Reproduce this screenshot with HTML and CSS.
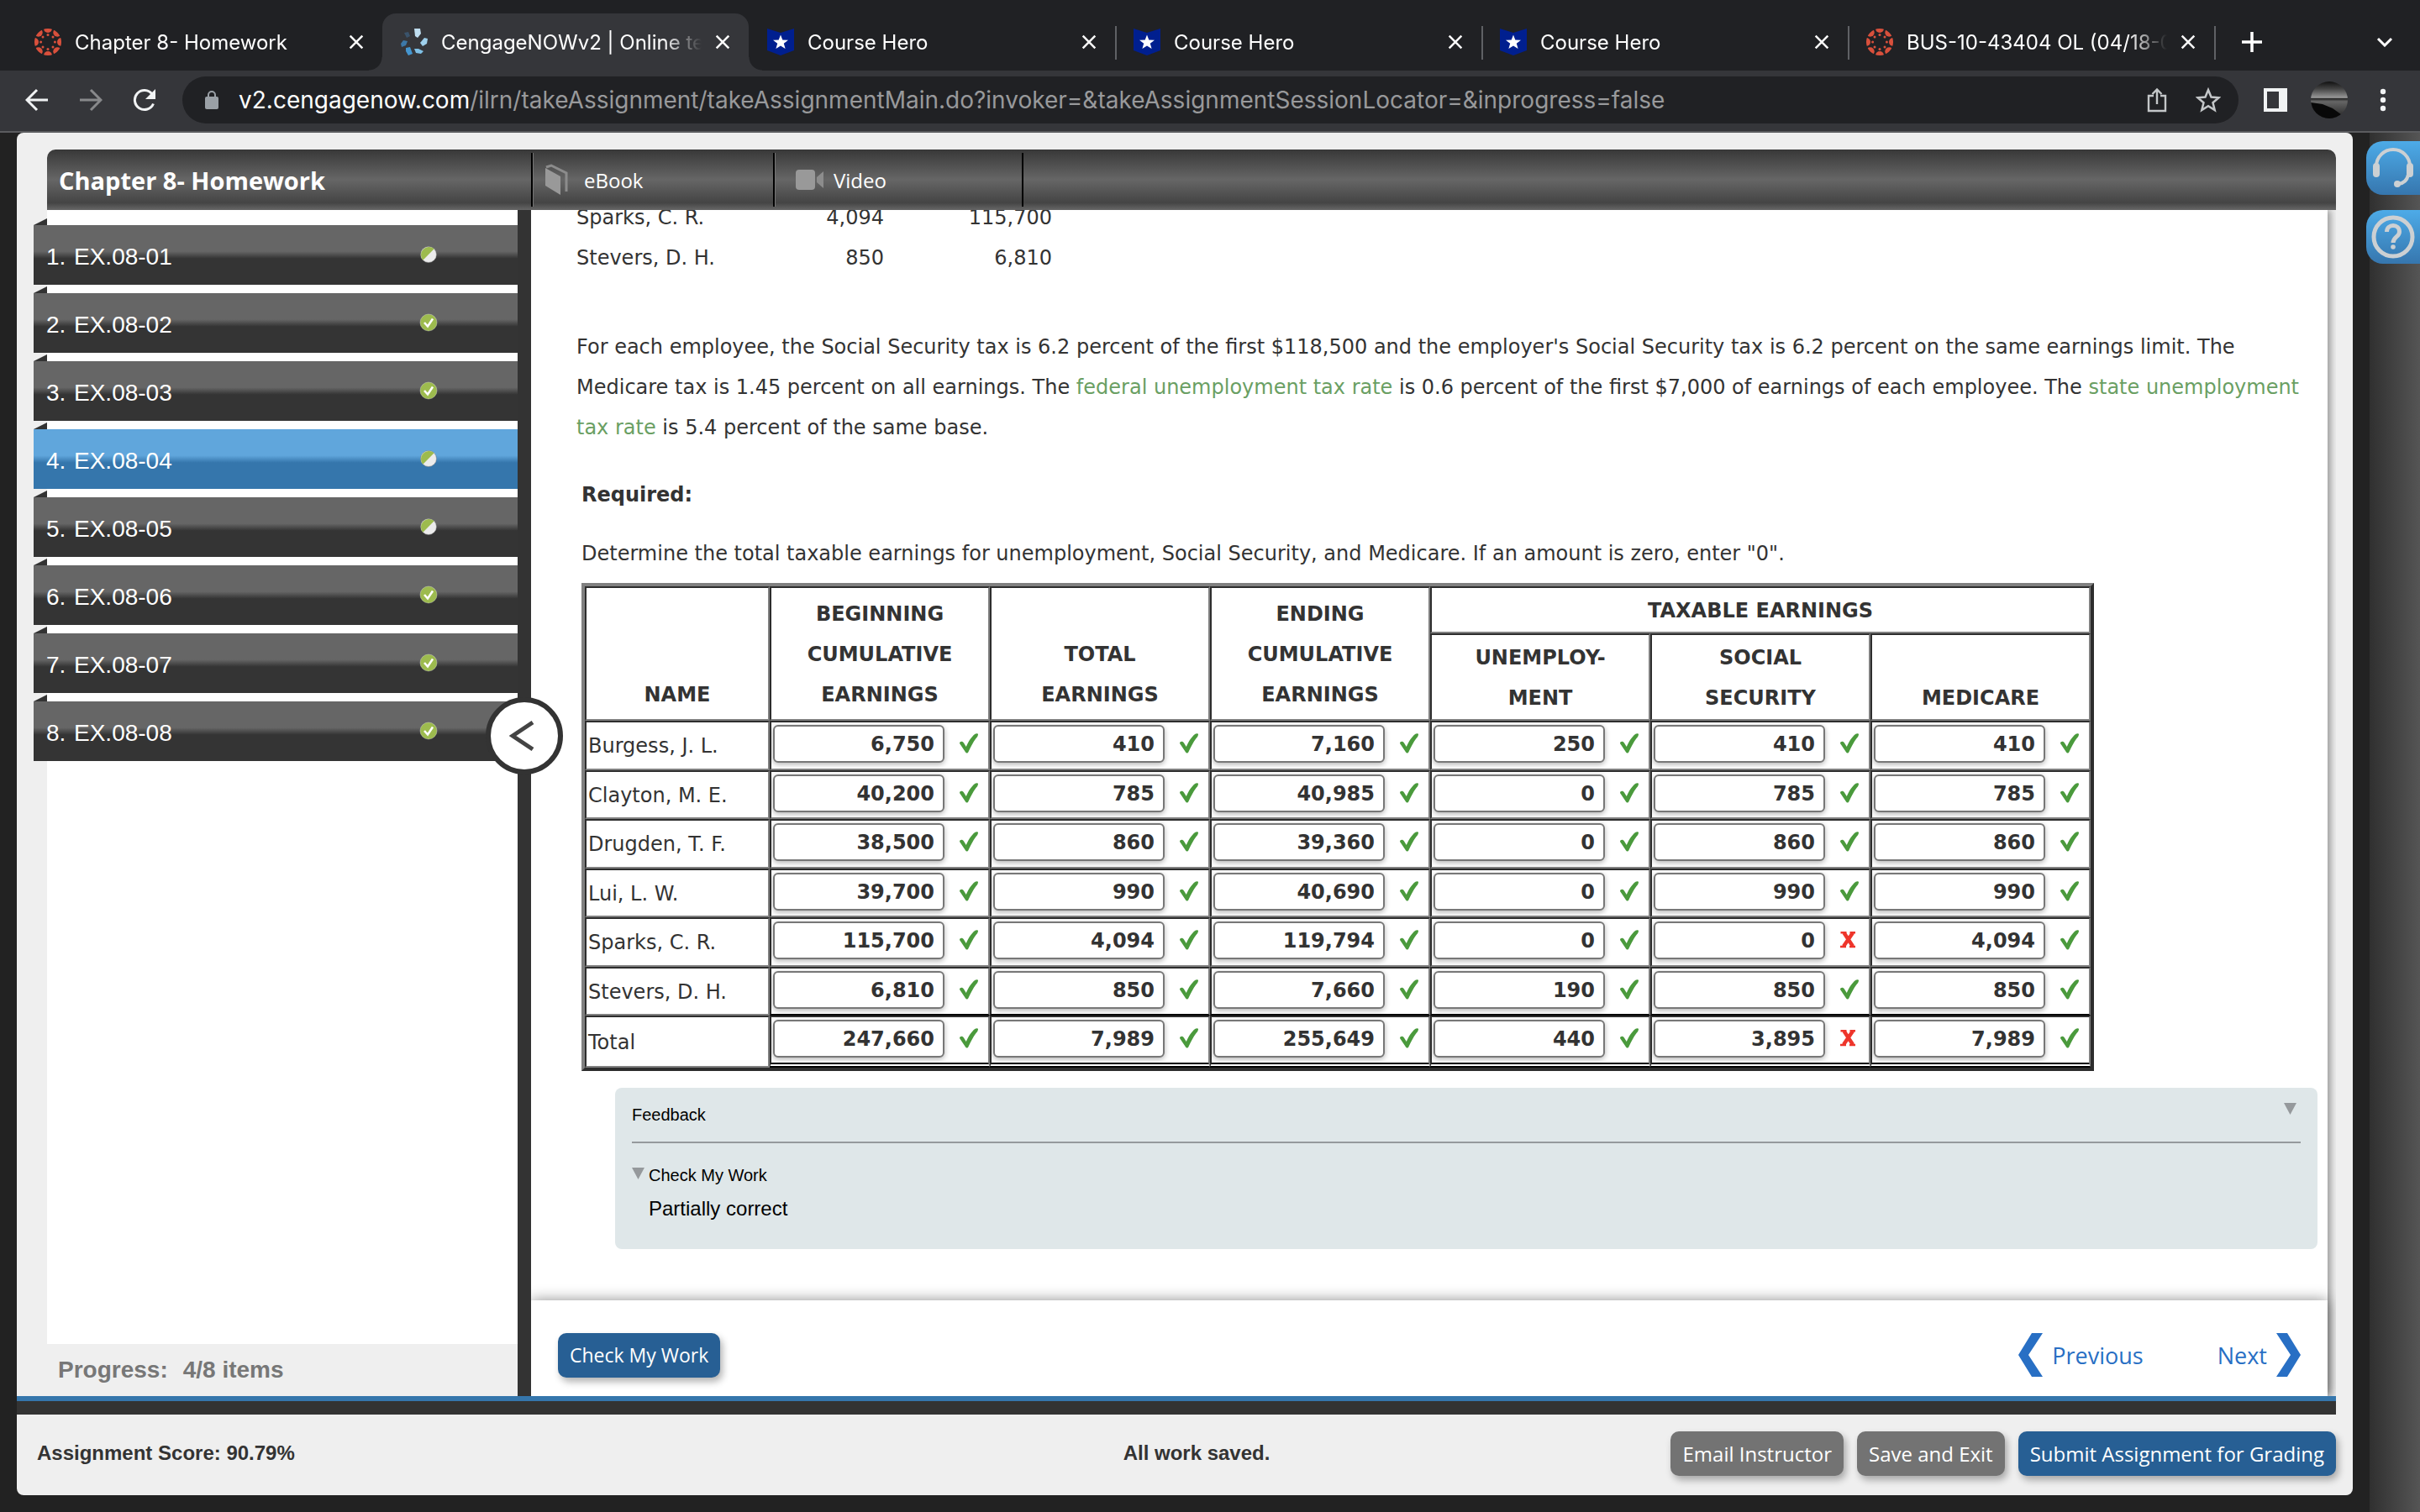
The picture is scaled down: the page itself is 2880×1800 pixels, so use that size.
FILE: index.html
```html
<!DOCTYPE html>
<html lang="en">
<head>
<meta charset="utf-8">
<title>CengageNOWv2 | Online teaching and learning resource</title>
<link rel="stylesheet" href="styles.css">
</head>
<body>
<svg class="defs" aria-hidden="true">
  <symbol id="close" viewBox="0 0 16 16"><path d="M1.500 1.500l13 13M14.500 1.500l-13 13" stroke="currentColor" stroke-width="2.200" fill="none"/></symbol>
  <clipPath id="disc"><circle cx="16" cy="16" r="16"/></clipPath>
  <symbol id="canvas" viewBox="0 0 32 32">
    <g fill="#d9503c" clip-path="url(#disc)"><circle cx="16" cy="0" r="5"/><circle cx="16" cy="32" r="5"/><circle cx="0" cy="16" r="5"/><circle cx="32" cy="16" r="5"/><circle cx="4.700" cy="4.700" r="5"/><circle cx="27.300" cy="4.700" r="5"/><circle cx="4.700" cy="27.300" r="5"/><circle cx="27.300" cy="27.300" r="5"/></g>
    <g fill="#d9503c"><circle cx="16" cy="7.600" r="1.500"/><circle cx="16" cy="24.400" r="1.500"/><circle cx="7.600" cy="16" r="1.500"/><circle cx="24.400" cy="16" r="1.500"/><circle cx="10" cy="10" r="1.500"/><circle cx="22" cy="10" r="1.500"/><circle cx="10" cy="22" r="1.500"/><circle cx="22" cy="22" r="1.500"/></g>
  </symbol>
  <symbol id="hero" viewBox="0 0 32 32"><path fill="#001f8f" d="M0 0l16 5L32 0v26l-16 6L0 26z"/><path fill="#fff" d="M16 7.500l2.300 6.100 6.700.200-5.200 4 1.800 6.300-5.600-3.700-5.600 3.700 1.800-6.300-5.200-4 6.700-.200z"/></symbol>
  <symbol id="tick" viewBox="0 0 24 24"><path fill="#4a9a3c" d="M1 12c0-2.500 3.600-3 5-.500l2.800 4.500C11.500 10 15 4 19.500.800c1.300-.900 3.800-.600 3.500.700-.500 2.500-1.200 3.200-2.500 4.500C17 10.500 14.500 16 11.500 22c-1 2-2.600 2-3.600.200z"/></symbol>
  <symbol id="cross" viewBox="0 0 24 24"><path d="M5.500 3.500l10.500 16M16 3.500l-11 16" stroke="#ee352b" stroke-width="4.500"/><path d="M1.500 3.200h7M12.500 3.200h6.500M1 20h7M12 20h7" stroke="#ee352b" stroke-width="2.400"/></symbol>
  <symbol id="done" viewBox="0 0 22 22"><circle cx="11" cy="11" r="10" fill="#9dbb4e" stroke="#fff" stroke-opacity=".3"/><path d="M6 11l4 4.500 6-9" stroke="#fff" stroke-width="2.600" fill="none"/></symbol>
  <symbol id="part" viewBox="0 0 22 22"><circle cx="11" cy="11" r="9.500" fill="#ececec" stroke="#777" stroke-opacity=".5"/><path d="M4.300 17.700A9.500 9.500 0 0 1 17.700 4.300z" fill="#9dbb4e"/></symbol>
</svg>

<header class="browser">
  <div class="tabs">
    <div class="tab"><svg class="fav"><use href="#canvas"/></svg><span class="tab-title">Chapter 8- Homework</span><svg class="x"><use href="#close"/></svg></div>
    <div class="tab active"><svg class="fav" viewBox="0 0 32 32"><path d="M16 0h7l1 6-4 5-3-2z" fill="#c0def0"/><path d="M23 17l5-6 4 1-1 6-5 3z" fill="#9fd0ec"/><path d="M16 24l5 0 6 3-3 3-6-1z" fill="#7fc0e6"/><path d="M6 23l5-1 3 8-5 2-3-5z" fill="#4596cf"/><path d="M0 18l3-4 5 1-2 5-5 2z" fill="#3d78a8"/><path d="M4 5l5-1 2 5-4 2z" fill="#3a536b"/></svg><span class="tab-title">CengageNOWv2 | Online teaching</span><svg class="x"><use href="#close"/></svg></div>
    <div class="tab"><svg class="fav"><use href="#hero"/></svg><span class="tab-title">Course Hero</span><svg class="x"><use href="#close"/></svg></div>
    <div class="tab line"><svg class="fav"><use href="#hero"/></svg><span class="tab-title">Course Hero</span><svg class="x"><use href="#close"/></svg></div>
    <div class="tab line"><svg class="fav"><use href="#hero"/></svg><span class="tab-title">Course Hero</span><svg class="x"><use href="#close"/></svg></div>
    <div class="tab line"><svg class="fav"><use href="#canvas"/></svg><span class="tab-title">BUS-10-43404 OL (04/18-06/30)</span><svg class="x"><use href="#close"/></svg></div>
    <div class="tab-tools line">
      <svg width="24" height="24" viewBox="0 0 24 24"><path d="M12 0v24M0 12h24" stroke="#fff" stroke-width="3.500"/></svg>
      <svg width="20" height="12" viewBox="0 0 20 12"><path d="M2 2l8 8 8-8" stroke="#fff" stroke-width="3" fill="none"/></svg>
    </div>
  </div>
  <div class="toolbar">
    <div class="nav">
      <svg viewBox="0 0 28 28"><path d="M27 14H3M14 2L2 14l12 12" stroke="#f1f3f4" stroke-width="3" fill="none"/></svg>
      <svg viewBox="0 0 28 28"><path d="M1 14h24M14 2l12 12-12 12" stroke="#88898b" stroke-width="3" fill="none"/></svg>
      <svg viewBox="0 0 28 28"><path d="M24.500 18.500A11.500 11.500 0 1 1 23 7" stroke="#f1f3f4" stroke-width="3" fill="none"/><path d="M27 1v12H15z" fill="#f1f3f4"/></svg>
    </div>
    <div class="address">
      <svg width="16" height="22" viewBox="0 0 16 22"><rect y="7" width="16" height="15" rx="2" fill="#9aa0a6"/><path d="M4 8V5a4 4 0 0 1 8 0v3" stroke="#9aa0a6" stroke-width="2" fill="none"/></svg>
      <span class="url">v2.cengagenow.com<span class="path">/ilrn/takeAssignment/takeAssignmentMain.do?invoker=&amp;takeAssignmentSessionLocator=&amp;inprogress=false</span></span>
      <svg width="24" height="30" viewBox="0 0 24 30"><path d="M8 10H2v18h20V10h-6M12 20V3M6.500 8L12 2.500 17.500 8" stroke="#c4c7c9" stroke-width="2.400" fill="none"/></svg>
      <svg width="30" height="30" viewBox="0 0 30 30"><path d="M15 3l3.500 8.500 9 .700-7 6 2.200 8.800L15 22.300 7.300 27l2.200-8.800-7-6 9-.700z" stroke="#c4c7c9" stroke-width="2.500" fill="none"/></svg>
    </div>
    <div class="tools">
      <svg width="28" height="28" viewBox="0 0 28 28"><path fill="#f1f3f4" d="M0 0h28v28H0zM4 4v20h14V4z" fill-rule="evenodd"/></svg>
      <svg width="44" height="44" viewBox="0 0 44 44"><defs><clipPath id="round"><circle cx="22" cy="22" r="22"/></clipPath><linearGradient id="sky" x2="0" y2="1"><stop offset="0" stop-color="#111"/><stop offset=".2" stop-color="#444"/><stop offset=".44" stop-color="#999"/><stop offset=".46" stop-color="#222"/><stop offset=".54" stop-color="#666"/><stop offset="1" stop-color="#222"/></linearGradient></defs><g clip-path="url(#round)"><path fill="url(#sky)" d="M0 0h44v44H0z"/><path fill="#080808" d="M0 25l14 2 12 5 14 10v2H0z"/></g></svg>
      <svg width="8" height="28" viewBox="0 0 8 28"><g fill="#f1f3f4"><circle cx="4" cy="4" r="3.200"/><circle cx="4" cy="14" r="3.200"/><circle cx="4" cy="24" r="3.200"/></g></svg>
    </div>
  </div>
</header>

<div class="page">
  <div class="app">
    <div class="titlebar">
      <h1>Chapter 8- Homework</h1>
      <a class="tool ebook" href="#ebook"><svg width="28" height="38" viewBox="0 0 28 38"><path fill="#999" d="M1 5l18 10v22L1 26z"/><path d="M2 4l6-2 18 9v22" stroke="#8c8c8c" stroke-width="3" fill="none"/></svg>eBook</a>
      <a class="tool video" href="#video"><svg width="34" height="24" viewBox="0 0 34 24"><rect width="23" height="24" rx="4" fill="#999"/><path d="M33 2v20l-8-7V9z" fill="#8c8c8c"/></svg>Video</a>
    </div>

    <div class="workspace">
      <nav class="sidebar">
        <ol class="items">
          <li><a href="#1"><span class="num">1.</span>EX.08-01<svg><use href="#part"/></svg></a></li>
          <li><a href="#2"><span class="num">2.</span>EX.08-02<svg><use href="#done"/></svg></a></li>
          <li><a href="#3"><span class="num">3.</span>EX.08-03<svg><use href="#done"/></svg></a></li>
          <li class="current"><a href="#4"><span class="num">4.</span>EX.08-04<svg><use href="#part"/></svg></a></li>
          <li><a href="#5"><span class="num">5.</span>EX.08-05<svg><use href="#part"/></svg></a></li>
          <li><a href="#6"><span class="num">6.</span>EX.08-06<svg><use href="#done"/></svg></a></li>
          <li><a href="#7"><span class="num">7.</span>EX.08-07<svg><use href="#done"/></svg></a></li>
          <li><a href="#8"><span class="num">8.</span>EX.08-08<svg><use href="#done"/></svg></a></li>
        </ol>
        <p class="progress"><span>Progress:</span><span>4/8 items</span></p>
      </nav>
      <div class="divider"><button class="collapse" aria-label="Collapse"><svg width="30" height="38" viewBox="0 0 30 38"><path d="M28 3L4 19l24 16" stroke="#444" stroke-width="5" fill="none"/></svg></button></div>

      <main class="content">
        <div class="question">
          <table class="given">
            <tr><td>Sparks, C. R.</td><td>4,094</td><td>115,700</td></tr>
            <tr><td>Stevers, D. H.</td><td>850</td><td>6,810</td></tr>
          </table>
          <p class="intro">For each employee, the Social Security tax is 6.2 percent of the first $118,500 and the employer's Social Security tax is 6.2 percent on the same earnings limit. The<br>Medicare tax is 1.45 percent on all earnings. The <a href="#futa">federal unemployment tax rate</a> is 0.6 percent of the first $7,000 of earnings of each employee. The <a href="#suta">state unemployment<br>tax rate</a> is 5.4 percent of the same base.</p>
          <h2>Required:</h2>
          <p class="ask">Determine the total taxable earnings for unemployment, Social Security, and Medicare. If an amount is zero, enter "0".</p>
          <table class="sheet">
            <colgroup><col class="c-name"><col><col><col><col><col><col></colgroup>
            <thead>
              <tr><th rowspan="2">NAME</th><th rowspan="2">BEGINNING<br>CUMULATIVE<br>EARNINGS</th><th rowspan="2">TOTAL<br>EARNINGS</th><th rowspan="2">ENDING<br>CUMULATIVE<br>EARNINGS</th><th colspan="3">TAXABLE EARNINGS</th></tr>
              <tr><th>UNEMPLOY-<br>MENT</th><th>SOCIAL<br>SECURITY</th><th>MEDICARE</th></tr>
            </thead>
            <tbody>
              <tr><td>Burgess, J. L.</td>
                <td><div><input aria-label="Burgess beginning" value="6,750"><svg><use href="#tick"/></svg></div></td>
                <td><div><input aria-label="Burgess total" value="410"><svg><use href="#tick"/></svg></div></td>
                <td><div><input aria-label="Burgess ending" value="7,160"><svg><use href="#tick"/></svg></div></td>
                <td><div><input aria-label="Burgess unemployment" value="250"><svg><use href="#tick"/></svg></div></td>
                <td><div><input aria-label="Burgess social security" value="410"><svg><use href="#tick"/></svg></div></td>
                <td><div><input aria-label="Burgess medicare" value="410"><svg><use href="#tick"/></svg></div></td></tr>
              <tr><td>Clayton, M. E.</td>
                <td><div><input aria-label="Clayton beginning" value="40,200"><svg><use href="#tick"/></svg></div></td>
                <td><div><input aria-label="Clayton total" value="785"><svg><use href="#tick"/></svg></div></td>
                <td><div><input aria-label="Clayton ending" value="40,985"><svg><use href="#tick"/></svg></div></td>
                <td><div><input aria-label="Clayton unemployment" value="0"><svg><use href="#tick"/></svg></div></td>
                <td><div><input aria-label="Clayton social security" value="785"><svg><use href="#tick"/></svg></div></td>
                <td><div><input aria-label="Clayton medicare" value="785"><svg><use href="#tick"/></svg></div></td></tr>
              <tr><td>Drugden, T. F.</td>
                <td><div><input aria-label="Drugden beginning" value="38,500"><svg><use href="#tick"/></svg></div></td>
                <td><div><input aria-label="Drugden total" value="860"><svg><use href="#tick"/></svg></div></td>
                <td><div><input aria-label="Drugden ending" value="39,360"><svg><use href="#tick"/></svg></div></td>
                <td><div><input aria-label="Drugden unemployment" value="0"><svg><use href="#tick"/></svg></div></td>
                <td><div><input aria-label="Drugden social security" value="860"><svg><use href="#tick"/></svg></div></td>
                <td><div><input aria-label="Drugden medicare" value="860"><svg><use href="#tick"/></svg></div></td></tr>
              <tr><td>Lui, L. W.</td>
                <td><div><input aria-label="Lui beginning" value="39,700"><svg><use href="#tick"/></svg></div></td>
                <td><div><input aria-label="Lui total" value="990"><svg><use href="#tick"/></svg></div></td>
                <td><div><input aria-label="Lui ending" value="40,690"><svg><use href="#tick"/></svg></div></td>
                <td><div><input aria-label="Lui unemployment" value="0"><svg><use href="#tick"/></svg></div></td>
                <td><div><input aria-label="Lui social security" value="990"><svg><use href="#tick"/></svg></div></td>
                <td><div><input aria-label="Lui medicare" value="990"><svg><use href="#tick"/></svg></div></td></tr>
              <tr><td>Sparks, C. R.</td>
                <td><div><input aria-label="Sparks beginning" value="115,700"><svg><use href="#tick"/></svg></div></td>
                <td><div><input aria-label="Sparks total" value="4,094"><svg><use href="#tick"/></svg></div></td>
                <td><div><input aria-label="Sparks ending" value="119,794"><svg><use href="#tick"/></svg></div></td>
                <td><div><input aria-label="Sparks unemployment" value="0"><svg><use href="#tick"/></svg></div></td>
                <td><div><input aria-label="Sparks social security" value="0"><svg><use href="#cross"/></svg></div></td>
                <td><div><input aria-label="Sparks medicare" value="4,094"><svg><use href="#tick"/></svg></div></td></tr>
              <tr class="last"><td>Stevers, D. H.</td>
                <td><div><input aria-label="Stevers beginning" value="6,810"><svg><use href="#tick"/></svg></div></td>
                <td><div><input aria-label="Stevers total" value="850"><svg><use href="#tick"/></svg></div></td>
                <td><div><input aria-label="Stevers ending" value="7,660"><svg><use href="#tick"/></svg></div></td>
                <td><div><input aria-label="Stevers unemployment" value="190"><svg><use href="#tick"/></svg></div></td>
                <td><div><input aria-label="Stevers social security" value="850"><svg><use href="#tick"/></svg></div></td>
                <td><div><input aria-label="Stevers medicare" value="850"><svg><use href="#tick"/></svg></div></td></tr>
              <tr class="total"><td>Total</td>
                <td><div><input aria-label="Total beginning" value="247,660"><svg><use href="#tick"/></svg></div></td>
                <td><div><input aria-label="Total earnings" value="7,989"><svg><use href="#tick"/></svg></div></td>
                <td><div><input aria-label="Total ending" value="255,649"><svg><use href="#tick"/></svg></div></td>
                <td><div><input aria-label="Total unemployment" value="440"><svg><use href="#tick"/></svg></div></td>
                <td><div><input aria-label="Total social security" value="3,895"><svg><use href="#cross"/></svg></div></td>
                <td><div><input aria-label="Total medicare" value="7,989"><svg><use href="#tick"/></svg></div></td></tr>
            </tbody>
          </table>
          <section class="feedback">
            <div class="feedback-head"><h3>Feedback</h3><span class="arrow"></span></div>
            <div class="feedback-row"><span class="arrow"></span><h3>Check My Work</h3></div>
            <p>Partially correct</p>
          </section>
        </div>
        <footer class="actions">
          <button class="btn primary">Check My Work</button>
          <div class="pager">
            <a href="#prev"><svg width="30" height="52" viewBox="0 0 30 52"><path fill="#286fc4" d="M16 0h13L12 26l17 26H16L0 26z"/></svg>Previous</a>
            <a href="#next">Next<svg width="30" height="52" viewBox="0 0 30 52"><path fill="#286fc4" d="M14 0H1l17 26L1 52h13l16-26z"/></svg></a>
          </div>
        </footer>
      </main>
    </div>

    <div class="rule"></div>
    <footer class="status">
      <p>Assignment Score: 90.79%</p>
      <p>All work saved.</p>
      <div class="buttons"><button class="btn">Email Instructor</button><button class="btn">Save and Exit</button><button class="btn primary">Submit Assignment for Grading</button></div>
    </footer>
  </div>

  <aside class="rail">
    <button aria-label="Support"><svg width="52" height="52" viewBox="0 0 52 52"><path d="M6 24a20 20 0 0 1 40 0M44 34q-2 10-12 11" stroke="#ccd0d3" stroke-width="4" fill="none"/><g fill="#ccd0d3"><rect x="2" y="20" width="8" height="17" rx="4"/><rect x="42" y="20" width="8" height="17" rx="4"/><circle cx="31" cy="45" r="4"/></g></svg></button>
    <button aria-label="Help"><svg width="52" height="52" viewBox="0 0 52 52"><circle cx="26" cy="26" r="23" stroke="#ccd0d3" stroke-width="5" fill="none"/><path d="M18.500 20c0-10 15-10 15 0 0 6-7.500 6-7.500 13" stroke="#ccd0d3" stroke-width="5" fill="none"/><circle cx="26" cy="38" r="2.800" fill="#ccd0d3"/></svg></button>
  </aside>
</div>
</body>
</html>
```

FILE: styles.css
```css
* { box-sizing: border-box; }
body { margin: 0; min-height: 100vh; display: flex; flex-direction: column; background: #222; color: #333; font-family: "Liberation Sans", Arial, sans-serif; font-size: 24px; }
h1, h2, h3, p, ol { margin: 0; padding: 0; }
a { color: inherit; text-decoration: none; }
button, input { font: inherit; margin: 0; }
svg { display: block; flex: none; }
.defs { position: absolute; width: 0; height: 0; }

/* browser chrome */
.browser { color: #fff; font-family: Inter, sans-serif; background: #202124; }
.tabs { display: flex; height: 84px; padding: 16px 32px 0 19px; }
.tab { flex: 0 1 436px; min-width: 0; display: flex; align-items: center; gap: 16px; padding: 0 22px; position: relative; }
.tab.active { background: #35363a; border-radius: 16px 16px 0 0; }
.tab.active::before, .tab.active::after { content: ""; position: absolute; bottom: 0; width: 16px; height: 16px; }
.tab.active::before { right: 100%; background: radial-gradient(circle at 0 0, #202124 15px, #35363a 16px); }
.tab.active::after { left: 100%; background: radial-gradient(circle at 100% 0, #202124 15px, #35363a 16px); }
.line { background: linear-gradient(#5f6165, #5f6165) 0 15px / 2px 40px no-repeat; }
.fav { width: 32px; height: 32px; }
.x { width: 18px; height: 18px; }
.tab-title { flex: 1; min-width: 0; overflow: hidden; white-space: nowrap; -webkit-mask-image: linear-gradient(90deg, #000 85%, transparent); mask-image: linear-gradient(90deg, #000 85%, transparent); }
.tab-tools { flex: 1; display: flex; align-items: center; justify-content: space-between; padding-left: 33px; }
.toolbar { display: flex; align-items: center; height: 74px; padding: 0 40px 2px 30px; background: #35363a; border-bottom: 2px solid #5b5c5f; }
.nav { display: flex; gap: 36px; margin-right: 31px; }
.nav svg { width: 28px; height: 28px; }
.address { flex: 1; display: flex; align-items: center; height: 56px; padding: 0 21px 0 27px; gap: 34px; border-radius: 28px; background: #202124; }
.url { flex: 1; margin-left: -10px; font-size: 28px; white-space: nowrap; }
.path { color: #98999b; }
.tools { display: flex; align-items: center; gap: 28px; margin-left: 30px; }
.tools svg:last-child { margin-left: 10px; }

/* page shell */
.page { flex: 1; display: flex; gap: 20px; padding-left: 20px; }
.app { flex: 1; min-width: 0; display: flex; flex-direction: column; margin-bottom: 20px; padding-top: 20px; background: #efefef; border-radius: 8px; }
.rail { width: 60px; display: flex; flex-direction: column; gap: 18px; padding-top: 10px; background: linear-gradient(90deg, #303030, #555); }
.rail button { height: 64px; margin-left: -4px; padding: 6px; border: 0; border-radius: 20px 0 0 20px; background: linear-gradient(#4dabe8, #3676ae); }

.titlebar { display: flex; align-items: center; height: 72px; margin: 0 20px 0 36px; border-radius: 10px 10px 0 0; color: #fff; background: linear-gradient(#383838, #666 50%, #444 88%, #666); }
h1 { width: 576px; padding-left: 14px; font: bold 29px "Open Sans", sans-serif; }
.tool { display: flex; align-items: center; gap: 19px; height: 64px; padding-left: 14px; border-left: 2px solid #000; box-shadow: inset 1px 0 #777; font-family: "Open Sans", sans-serif; }
.ebook { width: 288px; }
.video { width: 298px; padding-left: 25px; gap: 11px; border-right: 2px solid #000; }

/* sidebar */
.workspace { flex: 1; display: flex; padding-right: 20px; }
.sidebar { width: 596px; padding-left: 36px; display: flex; flex-direction: column; }
.items { flex: 1; list-style: none; display: flex; flex-direction: column; gap: 10px; padding-top: 18px; background: #fff; }
.items li { height: 71px; margin-left: -16px; position: relative; background: linear-gradient(#666 44%, #343434 56%); color: #fff; font-size: 28px; }
.items li.current { background: linear-gradient(#60a6dc 44%, #3576ac 56%); }
.items li::before { content: ""; position: absolute; top: -8px; left: 0; width: 16px; height: 8px; background: #333; clip-path: polygon(100% 0, 100% 100%, 0 100%); }
.items a { display: flex; align-items: center; height: 71px; padding: 4px 95px 0 15px; }
.items svg { width: 22px; height: 22px; margin: -6px 0 0 auto; }
.num { width: 33px; }
.progress { display: flex; gap: 18px; height: 62px; line-height: 62px; padding-left: 13px; font-size: 28px; font-weight: bold; color: #777; }
.divider { width: 16px; background: #333; position: relative; }
.collapse { position: absolute; top: 580px; left: -38px; z-index: 2; width: 92px; height: 92px; display: grid; place-items: center; padding: 0 6px 0 0; border: 6px solid #333; border-radius: 50%; background: #fff; }

/* question */
.content { flex: 1; min-width: 0; display: flex; flex-direction: column; margin-right: 10px; background: #fff; box-shadow: 4px 0 8px rgba(0, 0, 0, .35); clip-path: inset(0 -10px 0 0); }
.question { flex: 1; padding: 0 12px 60px 54px; overflow: hidden; line-height: 48px; font-family: "DejaVu Sans", Verdana, sans-serif; }
.given { margin-top: -15px; border-collapse: collapse; }
.given td { padding: 0; height: 48px; text-align: right; }
.given td:first-child { width: 170px; text-align: left; }
.given td:nth-child(2) { width: 196px; }
.given td:nth-child(3) { width: 200px; }
.intro { margin-top: 58px; white-space: nowrap; }
.intro a { color: #6a9f63; }
h2 { margin: 32px 0 22px 6px; font-size: 24px; }
.ask { margin-left: 6px; }
.sheet { width: 1800px; max-width: 100%; margin: 11px 0 20px 6px; table-layout: fixed; border: 4px solid; border-color: #808080 #2d2d2d #2d2d2d #808080; border-spacing: 0; background: #fff; }
.c-name { width: 220px; }
.sheet th, .sheet td { padding: 3px 2px 1px; border: 2px solid; border-color: #2d2d2d #808080 #808080 #2d2d2d; }
.sheet th { vertical-align: bottom; }
.sheet th[rowspan] { padding-bottom: 5px; }
.sheet tbody tr { height: 58px; }
.sheet tbody tr:nth-child(odd) { height: 59px; }
.sheet tbody td { line-height: 45px; }
.sheet td + td { padding: 3px 2px; vertical-align: top; }
.sheet td div { display: flex; align-items: center; gap: 17px; }
.sheet input { width: 204px; height: 45px; padding: 1px 10px 0; border: 2px solid #777; border-radius: 6px; background: #fff; color: #333; font-weight: bold; text-align: right; box-shadow: 0 2px 6px rgba(0, 0, 0, .3); }
.sheet svg { width: 24px; height: 24px; margin-top: -2px; }
.sheet .last td + td { border-bottom-color: #000; }
.sheet tbody tr.total { height: 62px; }
.sheet .total td + td { border-bottom: 6px double #000; }

.feedback { margin-left: 46px; height: 192px; padding: 8px 20px; border-radius: 8px; background: #dfe7e9; color: #000; font-family: "Liberation Sans", Arial, sans-serif; }
.feedback h3 { font-size: 20px; font-weight: normal; }
.feedback-head { display: flex; justify-content: space-between; height: 58px; padding-right: 5px; border-bottom: 2px solid #95999c; }
.feedback-row { display: flex; gap: 5px; margin-top: 14px; height: 44px; }
.feedback p { margin-left: 20px; line-height: 40px; }
.arrow { width: 15px; height: 14px; margin-top: 10px; background: #95999c; clip-path: polygon(0 0, 100% 0, 50% 100%); }
.feedback-row .arrow { margin-top: 15px; }

.actions { display: flex; align-items: center; justify-content: space-between; height: 114px; padding: 16px 32px 0; background: #fff; box-shadow: 0 0 16px rgba(0, 0, 0, .45); }
.btn { height: 53px; padding: 0 14px; border: 0; border-radius: 10px; background: #737373; color: #fff; font-family: "Open Sans", sans-serif; box-shadow: 3px 5px 8px rgba(0, 0, 0, .3); }
.btn.primary { background: #275f94; }
.actions .btn { font-size: 23px; }
.pager { display: flex; gap: 88px; font: 27px "Open Sans", sans-serif; color: #286fc4; }
.pager a { display: flex; align-items: center; gap: 10px; }

.rule { height: 22px; margin-right: 20px; background: #333; border-top: 6px solid #3576ac; }
.status { display: grid; grid-template-columns: 1fr auto 1fr; align-items: center; height: 96px; padding: 0 20px 4px 24px; }
.status p { font-weight: bold; }
.status p + p { padding-left: 24px; }
.buttons { display: flex; justify-content: flex-end; gap: 16px; }
```
